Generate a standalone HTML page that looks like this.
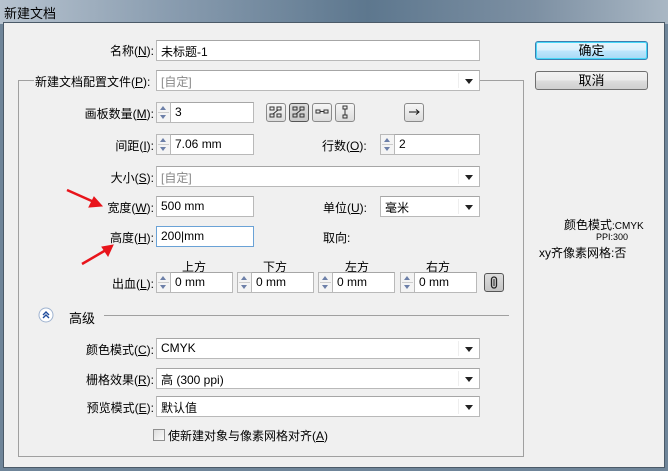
<!DOCTYPE html>
<html><head><meta charset="utf-8"><style>
*{box-sizing:border-box;margin:0;padding:0}
body{width:668px;height:471px;overflow:hidden;background:#6f8599;font-family:"Liberation Sans","Noto Sans CJK SC",sans-serif;font-size:12px;color:#000;position:relative}
.a{position:absolute}
.title{left:0;top:0;width:668px;height:24px;background:linear-gradient(90deg,#b7c3cf 0%,#8a9db0 25%,#5d778e 55%,#7d90a3 80%,#a9b7c4 100%);}
.title span{position:absolute;left:4px;top:3px;font-size:13px;color:#000}
.win{left:3px;top:22px;width:662px;height:446px;background:#f0f0f0;border:1px solid #4b5a68}
.lbl{position:absolute;text-align:right;white-space:nowrap;font-size:12px}
.inp{position:absolute;background:#fff;border:1px solid #b9b9b9;border-top-color:#a6a6a6;height:21px;padding:2px 0 0 4px;font-size:12px;white-space:nowrap}
.sel::after{content:"";position:absolute;right:6px;top:8px;border-left:4px solid transparent;border-right:4px solid transparent;border-top:5px solid #222}
.sel::before{content:"";position:absolute;right:20px;top:2px;bottom:2px;border-left:1px solid #eee}
.sp{position:absolute;width:15px;height:21px;border:1px solid #b9b9b9;background:#f4f4f4}
.sp i{position:absolute;left:3px;border-left:3px solid transparent;border-right:3px solid transparent}
.sp .u{top:3px;border-bottom:4px solid #6c7fa8}
.sp .d{bottom:3px;border-top:4px solid #6c7fa8}
.sp::after{content:"";position:absolute;left:1px;right:1px;top:9px;border-top:1px solid #ccc}
.btn{position:absolute;width:113px;height:19px;border:1px solid #707070;border-radius:3px;background:linear-gradient(#f2f2f2,#ebebeb 50%,#dddddd 51%,#cfcfcf);text-align:center;font-size:13px;line-height:17px}
.ib{position:absolute;width:20px;height:19px;border:1px solid #8a8a8a;border-radius:3px;background:linear-gradient(#f6f6f6,#dcdcdc)}
u{text-decoration:underline}
</style></head><body>
<div class="a title"><span>新建文档</span></div>
<div class="a win"></div>
<!-- group frame -->
<div class="a" style="left:18px;top:80px;width:506px;height:377px;border:1px solid #a0a0a0;border-top:none"></div>
<div class="a" style="left:18px;top:80px;width:16px;border-top:1px solid #a0a0a0"></div>
<div class="a" style="left:480px;top:80px;width:44px;border-top:1px solid #a0a0a0"></div>

<div class="lbl" style="right:514px;top:42px">名称(<u>N</u>):</div>
<div class="inp" style="left:156px;top:40px;width:324px;height:21px">未标题-1</div>

<div class="lbl" style="left:35px;top:73px">新建文档配置文件(<u>P</u>):</div>
<div class="inp sel" style="left:156px;top:70px;width:324px;color:#888">[自定]</div>

<div class="lbl" style="right:514px;top:105px">画板数量(<u>M</u>):</div>
<div class="sp" style="left:156px;top:102px"><i class="u"></i><i class="d"></i></div>
<div class="inp" style="left:170px;top:102px;width:84px">3</div>
<div class="ib" style="left:266px;top:103px"><svg width="18" height="17" viewBox="0 0 18 17"><g fill="none" stroke="#333"><rect x="3" y="3" width="4" height="3"/><rect x="10" y="3" width="4" height="3"/><rect x="3" y="10" width="4" height="3"/><rect x="10" y="10" width="4" height="3"/><path d="M11 6L6 10"/></g></svg></div>
<div class="ib" style="left:289px;top:103px;border-color:#555;background:linear-gradient(#ddd,#c8c8c8)"><svg width="18" height="17" viewBox="0 0 18 17"><g fill="none" stroke="#333"><rect x="3" y="3" width="4" height="3"/><rect x="10" y="3" width="4" height="3"/><rect x="3" y="10" width="4" height="3"/><rect x="10" y="10" width="4" height="3"/><path d="M6 10L11 6"/></g></svg></div>
<div class="ib" style="left:312px;top:103px"><svg width="18" height="17" viewBox="0 0 18 17"><g fill="none" stroke="#333"><rect x="3" y="6" width="4" height="3"/><rect x="11" y="6" width="4" height="3"/><path d="M7 7.5H11"/></g></svg></div>
<div class="ib" style="left:335px;top:103px"><svg width="18" height="17" viewBox="0 0 18 17"><g fill="none" stroke="#333"><rect x="7" y="2" width="4" height="3"/><rect x="7" y="11" width="4" height="3"/><path d="M9 5V11"/></g></svg></div>
<div class="ib" style="left:404px;top:103px"><svg width="18" height="17" viewBox="0 0 18 17"><path d="M4 8H14M11 5.5L14 8L11 10.5" fill="none" stroke="#111"/></svg></div>

<div class="lbl" style="right:514px;top:137px">间距(<u>I</u>):</div>
<div class="sp" style="left:156px;top:134px"><i class="u"></i><i class="d"></i></div>
<div class="inp" style="left:170px;top:134px;width:84px">7.06 mm</div>
<div class="lbl" style="left:322px;top:137px">行数(<u>O</u>):</div>
<div class="sp" style="left:380px;top:134px"><i class="u"></i><i class="d"></i></div>
<div class="inp" style="left:394px;top:134px;width:86px">2</div>

<div class="lbl" style="right:514px;top:169px">大小(<u>S</u>):</div>
<div class="inp sel" style="left:156px;top:166px;width:324px;color:#888">[自定]</div>

<div class="lbl" style="right:514px;top:199px">宽度(<u>W</u>):</div>
<div class="inp" style="left:156px;top:196px;width:98px">500 mm</div>
<div class="lbl" style="left:323px;top:199px">单位(<u>U</u>):</div>
<div class="inp sel" style="left:380px;top:196px;width:100px">毫米</div>

<div class="lbl" style="right:514px;top:229px">高度(<u>H</u>):</div>
<div class="inp" style="left:156px;top:226px;width:98px;border-color:#6aa2d6">200|mm</div>
<div class="lbl" style="left:323px;top:229px">取向:</div>

<div class="lbl" style="left:182px;top:258px">上方</div>
<div class="lbl" style="left:263px;top:258px">下方</div>
<div class="lbl" style="left:345px;top:258px">左方</div>
<div class="lbl" style="left:426px;top:258px">右方</div>
<div class="lbl" style="right:514px;top:275px">出血(<u>L</u>):</div>
<div class="sp" style="left:156px;top:272px"><i class="u"></i><i class="d"></i></div>
<div class="inp" style="left:170px;top:272px;width:63px">0 mm</div>
<div class="sp" style="left:237px;top:272px"><i class="u"></i><i class="d"></i></div>
<div class="inp" style="left:251px;top:272px;width:63px">0 mm</div>
<div class="sp" style="left:318px;top:272px"><i class="u"></i><i class="d"></i></div>
<div class="inp" style="left:332px;top:272px;width:63px">0 mm</div>
<div class="sp" style="left:400px;top:272px"><i class="u"></i><i class="d"></i></div>
<div class="inp" style="left:414px;top:272px;width:63px">0 mm</div>
<div class="ib" style="left:484px;top:273px;border-color:#555;background:linear-gradient(#ddd,#c4c4c4)"><svg width="18" height="17" viewBox="0 0 18 17"><rect x="6.5" y="3" width="5" height="11" rx="2.5" fill="none" stroke="#222" stroke-width="1.3"/><path d="M9 5V12" stroke="#222"/></svg></div>

<svg class="a" style="left:38px;top:307px" width="16" height="16"><circle cx="8" cy="8" r="7" fill="#fff" stroke="#9fb3d0"/><path d="M5 8L8 5L11 8M5 11L8 8L11 11" fill="none" stroke="#1f4b9c" stroke-width="1.4"/></svg>
<div class="lbl" style="left:69px;top:308px;font-size:13px">高级</div>
<div class="a" style="left:104px;top:315px;width:405px;border-top:1px solid #a0a0a0"></div>

<div class="lbl" style="right:514px;top:341px">颜色模式(<u>C</u>):</div>
<div class="inp sel" style="left:156px;top:338px;width:324px">CMYK</div>
<div class="lbl" style="right:514px;top:371px">栅格效果(<u>R</u>):</div>
<div class="inp sel" style="left:156px;top:368px;width:324px">高 (300 ppi)</div>
<div class="lbl" style="right:514px;top:399px">预览模式(<u>E</u>):</div>
<div class="inp sel" style="left:156px;top:396px;width:324px">默认值</div>
<div class="a" style="left:153px;top:429px;width:12px;height:12px;border:1px solid #8f8f8f;background:linear-gradient(135deg,#ddd,#fafafa)"></div>
<div class="lbl" style="left:168px;top:427px">使新建对象与像素网格对齐(<u>A</u>)</div>

<div class="btn" style="left:535px;top:41px;border-color:#3c7fb1;box-shadow:inset 0 0 0 1px #48d8f8;background:linear-gradient(#eaf6fd,#d9f0fc 50%,#bee6fd 51%,#a7d9f5)">确定</div>
<div class="btn" style="left:535px;top:71px">取消</div>

<div class="lbl" style="left:564px;top:216px;font-size:12px">颜色模式<span style="font-size:10px">:CMYK</span></div>
<div class="lbl" style="left:596px;top:232px;font-size:9px">PPI:300</div>
<div class="lbl" style="left:539px;top:244px;font-size:12px">xy齐像素网格:否</div>

<svg class="a" style="left:0;top:0" width="668" height="471"><g fill="#e8141b" stroke="#e8141b" stroke-width="2.5"><line x1="67" y1="190" x2="94" y2="202"/><path d="M102 206L89 207L94 197Z" stroke-width="1"/><line x1="82" y1="264" x2="106" y2="250"/><path d="M113 245L108 256L102 247Z" stroke-width="1"/></g></svg>
</body></html>
